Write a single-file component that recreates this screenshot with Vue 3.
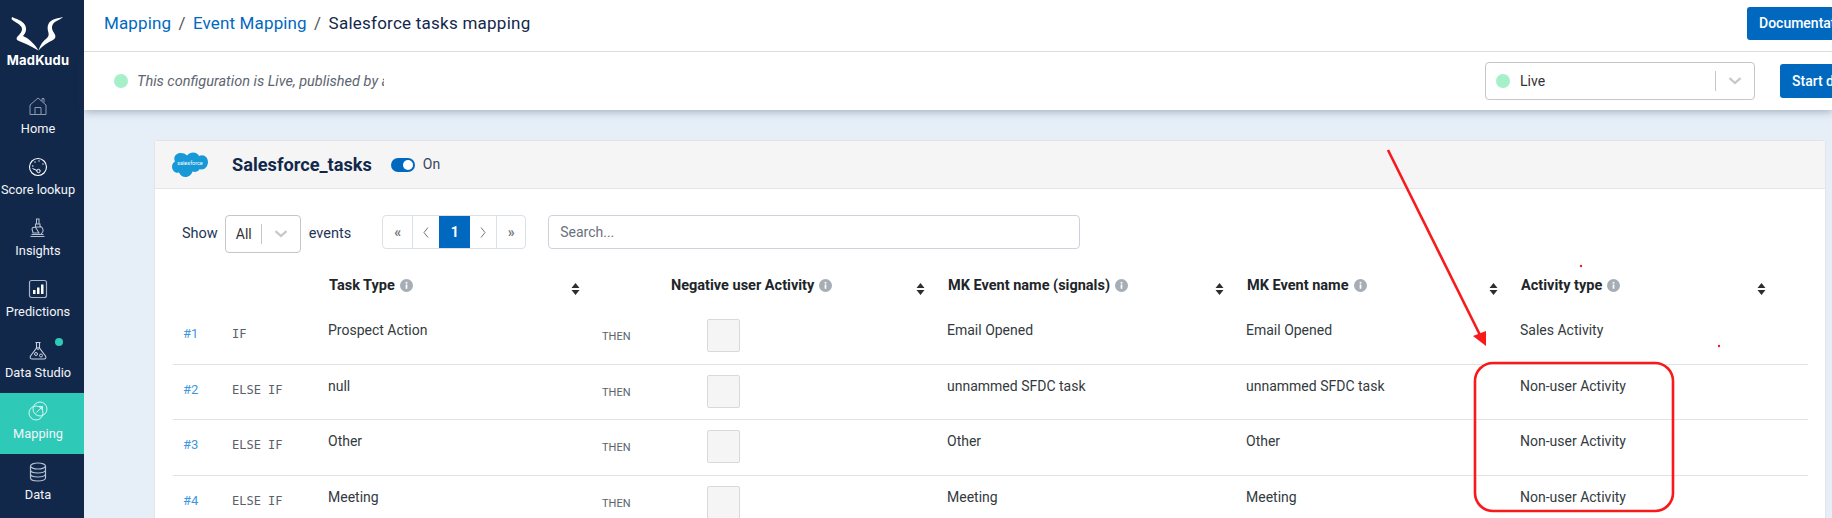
<script setup>
const navItems = [
  { key: 'home', label: 'Home' },
  { key: 'score', label: 'Score lookup' },
  { key: 'insights', label: 'Insights' },
  { key: 'predictions', label: 'Predictions' },
  { key: 'studio', label: 'Data Studio', badge: true },
  { key: 'mapping', label: 'Mapping', active: true },
  { key: 'data', label: 'Data' },
]
const headers = [
  { label: 'Task Type', cls: 'h-task' },
  { label: 'Negative user Activity', cls: 'h-neg' },
  { label: 'MK Event name (signals)', cls: 'h-sig' },
  { label: 'MK Event name', cls: 'h-name' },
  { label: 'Activity type', cls: 'h-act' },
]
const rows = [
  { n: '#1', cond: 'IF', task: 'Prospect Action', signal: 'Email Opened', name: 'Email Opened', type: 'Sales Activity' },
  { n: '#2', cond: 'ELSE IF', task: 'null', signal: 'unnammed SFDC task', name: 'unnammed SFDC task', type: 'Non-user Activity' },
  { n: '#3', cond: 'ELSE IF', task: 'Other', signal: 'Other', name: 'Other', type: 'Non-user Activity' },
  { n: '#4', cond: 'ELSE IF', task: 'Meeting', signal: 'Meeting', name: 'Meeting', type: 'Non-user Activity' },
]
</script>

<template>
  <div class="page">
    <aside class="sidebar">
      <div class="logo">
        <svg width="60" height="40" viewBox="8 14 60 40" class="logo-mark">
          <path fill="#fff" d="M12 17 C16 19 22 20 25 25 C27 29 26 33 23 36 C28 38 34 43 38.500 50.500 C31 46 24 43 19 41 C16 40 16 38 18 36 C21 33 23 30 21.500 27 C19 23 14 22 11.500 19 Z" />
          <path fill="#fff" d="M63 17 C60 20 55 21 53 24 C51 27 52 30 54 33 C56 36 56 38 53 40 C47 43 42 46 38.500 50.500 C40 45 43 41 47 38 C49 36 49 34 48 31 C47 27 48 23 51 21 C55 18 60 18 63 17 Z" />
        </svg>
        <div class="logo-text">MadKudu</div>
      </div>
      <nav class="nav">
        <a v-for="item in navItems" :key="item.key" class="nav-item" :class="{ active: item.active }">
          <span v-if="item.badge" class="nav-badge"></span>
          <svg class="nav-icon" width="20" height="20" viewBox="0 0 20 20" fill="none" stroke="currentColor" stroke-width="1">
            <template v-if="item.key === 'home'">
              <path d="M2 9 L10 2 L18 9 V18.500 H2 Z" stroke="#8c9bb1" />
              <path d="M7 18.500 V11.500 H13 V18.500" stroke="#8c9bb1" />
              <path d="M14 5 V2.500 H16 V6.500" stroke="#8c9bb1" />
            </template>
            <template v-else-if="item.key === 'score'">
              <circle cx="10" cy="10" r="8.500" stroke="#fff" stroke-width="1.100" />
              <circle cx="4.800" cy="9" r="0.700" fill="#fff" stroke="none" /><circle cx="7" cy="5" r="0.700" fill="#fff" stroke="none" />
              <circle cx="11" cy="4" r="0.700" fill="#fff" stroke="none" /><circle cx="15" cy="7" r="0.700" fill="#fff" stroke="none" />
              <path d="M4.500 11.500 L9 13.500" stroke="#fff" />
              <circle cx="10.500" cy="14" r="1.700" stroke="#fff" />
            </template>
            <template v-else-if="item.key === 'insights'">
              <path d="M8.500 1 H11 V6 H8.500 Z M7.500 6 H12 V9 H7.500 Z M12 8 C16 10 16 14 13 16 M4 11 C4 9 7 9 8 10 L11 15 H5 Z M2.500 18.500 H16.500 M3.500 16.500 H15.500" stroke="#b7c2d0" stroke-width="1.050" />
            </template>
            <template v-else-if="item.key === 'predictions'">
              <rect x="1.500" y="1.500" width="17" height="17" rx="2" stroke="#a9b5c5" stroke-width="1.200" />
              <rect x="5" y="11" width="2.500" height="4" fill="#fff" stroke="none" />
              <rect x="9" y="8.500" width="2.500" height="6.500" fill="#fff" stroke="none" />
              <rect x="13" y="5.500" width="2.500" height="9.500" fill="#fff" stroke="none" />
            </template>
            <template v-else-if="item.key === 'studio'">
              <path d="M7.500 2.500 H12.500 M8.500 2.500 V8 L2.500 16 C1.500 18 3 19 4 19 H16 C17.500 19 18.500 18 17.500 16 L11.500 8 V2.500" stroke="#c8d1dd" stroke-width="1.100" />
              <circle cx="8" cy="14" r="1.500" stroke="#c8d1dd" /><circle cx="13" cy="15.500" r="1.500" stroke="#c8d1dd" /><circle cx="10" cy="8.500" r="1" stroke="#c8d1dd" />
            </template>
            <template v-else-if="item.key === 'mapping'">
              <circle cx="8" cy="12" r="7" stroke="#e8faf7" stroke-width="0.900" />
              <circle cx="12" cy="8" r="7" stroke="#e8faf7" stroke-width="0.900" />
              <path d="M8.500 11.500 L14.500 5.500 M11 5.500 H14.500 V9" stroke="#e8faf7" stroke-width="0.900" />
            </template>
            <template v-else>
              <ellipse cx="10" cy="4" rx="7.500" ry="3" stroke="#b7c2d0" stroke-width="1.200" />
              <path d="M2.500 4 V16 C2.500 20 17.500 20 17.500 16 V4 M2.500 8 C2.500 12 17.500 12 17.500 8 M2.500 12 C2.500 16 17.500 16 17.500 12" stroke="#b7c2d0" stroke-width="1.200" />
            </template>
          </svg>
          <span class="nav-label">{{ item.label }}</span>
        </a>
      </nav>
    </aside>

    <main class="main">
      <header class="topbar">
        <div class="crumbs">
          <a>Mapping</a><span class="sep">/</span><a>Event Mapping</a><span class="sep">/</span><span class="cur">Salesforce tasks mapping</span>
        </div>
        <button class="btn btn-doc">Documentation</button>
      </header>

      <div class="statusbar">
        <span class="dot"></span>
        <span class="status-text">This configuration is Live, published by a</span>
        <div class="select live-select">
          <span class="dot small-gap"></span>
          <span class="select-value">Live</span>
          <span class="select-sep"></span>
          <svg class="chev" width="14" height="8" viewBox="0 0 14 8"><path d="M1.500 1.200 L7 6 L12.500 1.200" fill="none" stroke="#c8c8c8" stroke-width="2.300" /></svg>
        </div>
        <button class="btn btn-start">Start draft</button>
      </div>

      <section class="card">
        <div class="card-head">
          <svg class="sf-logo" width="36" height="26" viewBox="0 0 36 26">
            <path fill="#1798d7" d="M15 3.500 C16.500 1.500 19 0.500 21 0.500 C24 0.500 26 2 27 4 C28 3.500 29 3.300 30 3.300 C33.500 3.300 36 6.500 36 10 C36 14 33 17.500 29.500 17.500 L27.500 17.300 C26.500 19 24.500 20 22.500 20 L20.500 19.500 C19.500 22.500 17 25 13.500 25 C10.500 25 8 23 7 20.500 L5.500 20.700 C2.500 20.700 0 18 0 14.700 C0 12.500 1 10.500 3 9.500 C2.500 8.500 2.300 7.500 2.300 6.500 C2.300 3.500 5 1 8.500 1 C11 1 13.500 1.800 15 3.500 Z" />
            <text x="18" y="12.500" text-anchor="middle" class="sf-text">salesforce</text>
          </svg>
          <h2 class="card-title">Salesforce_tasks</h2>
          <span class="toggle"><span class="knob"></span></span>
          <span class="toggle-label">On</span>
        </div>

        <div class="card-body">
          <div class="controls">
            <span class="ctl-label">Show</span>
            <div class="select all-select">
              <span class="select-value">All</span>
              <span class="select-sep"></span>
              <svg class="chev" width="14" height="8" viewBox="0 0 14 8"><path d="M1.500 1.200 L7 6 L12.500 1.200" fill="none" stroke="#c8c8c8" stroke-width="2.300" /></svg>
            </div>
            <span class="ctl-label">events</span>
            <div class="pager">
              <span class="pg pg-a">«</span>
              <span class="pg pg-b"><svg width="6" height="11" viewBox="0 0 6 11"><path d="M5 0.500 L1 5.500 L5 10.500" fill="none" stroke="#6d7680" /></svg></span>
              <span class="pg pg-c on">1</span>
              <span class="pg pg-b"><svg width="6" height="11" viewBox="0 0 6 11"><path d="M1 0.500 L5 5.500 L1 10.500" fill="none" stroke="#6d7680" /></svg></span>
              <span class="pg pg-a last">»</span>
            </div>
            <div class="search">Search...</div>
          </div>

          <div class="grid-row head-row">
            <div></div>
            <div></div>
            <div v-for="h in headers" :key="h.label" class="th" :class="h.cls">
              <span class="th-label">{{ h.label }}</span>
              <svg class="info" width="13" height="13" viewBox="0 0 12 12">
                <circle cx="6" cy="6" r="6" fill="#a6adb4" />
                <rect x="5.200" y="5" width="1.600" height="4" fill="#fff" /><rect x="5.200" y="2.700" width="1.600" height="1.500" fill="#fff" />
              </svg>
              <svg class="sort" width="9" height="12" viewBox="0 0 9 12">
                <path d="M4.500 0 L8.500 5 H0.500 Z M4.500 12 L8.500 7 H0.500 Z" fill="#2b2f33" />
              </svg>
            </div>
          </div>

          <div v-for="(r, i) in rows" :key="r.n" class="grid-row body-row" :class="{ first: i === 0 }">
            <div class="num">{{ r.n }}</div>
            <div class="cond">{{ r.cond }}</div>
            <div class="txt">{{ r.task }}</div>
            <div class="then">THEN</div>
            <div class="chk-cell"><span class="chk"></span></div>
            <div class="txt">{{ r.signal }}</div>
            <div class="txt">{{ r.name }}</div>
            <div class="txt">{{ r.type }}</div>
          </div>
        </div>
      </section>
    </main>

    <svg class="annot" width="1832" height="518" viewBox="0 0 1832 518">
      <line x1="1388" y1="150" x2="1480" y2="335" stroke="#f9191b" stroke-width="2.600" />
      <path d="M1486 346 L1473 336 L1486 331 Z" fill="#f9191b" />
      <rect x="1475" y="363" width="198" height="148" rx="18" fill="none" stroke="#f9191b" stroke-width="2.600" />
      <circle cx="1581" cy="266" r="1.200" fill="#f9191b" />
      <circle cx="1719" cy="346" r="1.200" fill="#f9191b" />
    </svg>
  </div>
</template>

<style>
html, body { margin: 0; padding: 0; overflow: hidden; }
</style>

<style scoped>
.page {
  position: relative;
  display: flex;
  width: 1832px;
  height: 518px;
  overflow: hidden;
  background: #e6eff8;
  font-family: Roboto, "Noto Sans", sans-serif;
  color: #12284b;
}
.sidebar { width: 84px; flex: none; background: #12284b; color: #fff; display: flex; flex-direction: column; }
.logo { height: 88px; display: flex; flex-direction: column; align-items: center; padding: 14px 8px 0 0; box-sizing: border-box; }
.logo-mark { display: block; }
.logo-text { font-family: Inter, sans-serif; font-weight: 700; font-size: 13px; line-height: 14px; margin-top: -1px; letter-spacing: 0.2px; }
.nav { display: flex; flex-direction: column; }
.nav-item { position: relative; height: 61px; display: flex; flex-direction: column; align-items: center; box-sizing: border-box; padding: 8px 8px 0 0; }
.nav-item.active { background: #2ec9b7; }
.nav-icon { display: block; }
.nav-label { font-size: 12.800px; font-weight: 400; line-height: 16px; margin-top: 5px; white-space: nowrap; color: #f3f5f8; }
.nav-badge { position: absolute; right: 21px; top: 6px; width: 8px; height: 8px; border-radius: 50%; background: #2ec9b7; }

.main { flex: 1; min-width: 0; display: flex; flex-direction: column; }
.topbar { position: relative; z-index: 2; height: 51px; flex: none; background: #fff; border-bottom: 1px solid #dcdcdc; display: flex; align-items: center; justify-content: space-between; padding-left: 20px; }
.crumbs { font-size: 17px; line-height: 22px; letter-spacing: 0.14px; color: #12284b; margin-top: -5px; white-space: nowrap; }
.crumbs a { color: #0069bf; }
.cur { letter-spacing: 0.24px; }
.sep { color: #555; margin: 0 7.300px; }
.btn { flex: none; border: 0; background: #0069bf; color: #fff; font-family: inherit; font-size: 14px; font-weight: 500; border-radius: 3px; padding: 0; text-align: left; }
.btn-doc { width: 120px; height: 33px; padding-left: 12px; margin-right: -35px; margin-top: -5px; white-space: nowrap; }
.statusbar { height: 58px; flex: none; background: #fff; display: flex; align-items: center; padding-left: 30px; box-shadow: 0 2px 8px rgba(40, 60, 90, 0.35); position: relative; z-index: 1; }
.dot { width: 14px; height: 14px; border-radius: 50%; background: #a5efc9; flex: none; }
.status-text { margin-left: 9px; width: 247px; flex: none; overflow: hidden; white-space: nowrap; font-size: 14.500px; font-style: italic; color: #5d6670; }
.select { display: flex; align-items: center; box-sizing: border-box; background: #fff; border: 1px solid #c6c6c6; border-radius: 4px; }
.live-select { width: 270px; height: 38px; margin-left: 1101px; padding-left: 10px; flex: none; }
.small-gap { margin-right: 10px; }
.select-value { font-size: 14px; color: #333; }
.live-select .select-value { flex: 1; }
.select-sep { width: 1px; height: 20px; background: #c6c6c6; flex: none; }
.chev { display: block; flex: none; margin-left: 12px; margin-right: 12px; }
.btn-start { width: 90px; height: 34px; margin-left: 25px; padding-left: 12px; white-space: nowrap; }

.card { margin: 30px 0 0 70px; width: 1672px; flex: none; background: #fff; border: 1px solid #e2e4e6; border-radius: 3px; box-sizing: border-box; }
.card-head { height: 47px; background: #f5f5f5; border-bottom: 1px solid #e6e6e6; display: flex; align-items: center; padding-left: 17px; }
.sf-logo { display: block; flex: none; }
.sf-text { font-family: Roboto, sans-serif; font-size: 5.500px; fill: #fff; }
.card-title { margin: 0 0 0 24px; font-size: 18.200px; font-weight: 700; color: #12284b; line-height: 22px; }
.toggle { position: relative; width: 24px; height: 14px; border-radius: 7px; background: #0069bf; margin-left: 19px; flex: none; }
.knob { position: absolute; right: 2px; top: 2px; width: 10px; height: 10px; border-radius: 50%; background: #fff; }
.toggle-label { margin-left: 8px; font-size: 14px; color: #38465c; margin-top: -1px; }
.card-body { padding: 26px 0 0 18px; }

.controls { display: flex; align-items: flex-start; height: 51px; padding-left: 9px; }
.ctl-label { font-size: 14.500px; line-height: 38px; color: #1d3557; }
.all-select { width: 76px; height: 38px; margin: 0 8px 0 7px; padding-left: 10px; flex: none; }
.all-select .select-value { width: 27px; }
.pager { display: flex; margin-left: 31px; height: 34px; box-sizing: border-box; border: 1px solid #dbe1e6; border-radius: 4px; overflow: hidden; }
.pg { display: flex; align-items: center; justify-content: center; font-size: 14px; color: #6d7680; border-right: 1px solid #dbe1e6; box-sizing: border-box; }
.pg-a { width: 30px; font-weight: 700; }
.pg-b { width: 26px; border-right: 0; }
.pg-c { width: 31px; border: 0; }
.pg.on { background: #0069bf; color: #fff; font-weight: 700; }
.pg.last { width: 29px; border-right: 0; border-left: 1px solid #dbe1e6; }
.search { width: 532px; height: 34px; margin-left: 22px; box-sizing: border-box; border: 1px solid #ccd3da; border-radius: 4px; font-size: 14px; line-height: 32px; padding-left: 11px; color: #68727c; }

.grid-row { display: grid; grid-template-columns: 49px 96px 274px 68px 277px 299px 274px 298px; width: 1635px; }
.head-row { height: 42px; }
.grid-row > .h-task { grid-column: 3; }
.grid-row > .h-neg { grid-column: 5; }
.th { position: relative; display: flex; align-items: flex-start; gap: 5px; padding: 11px 0 0 11px; }
.th-label { font-size: 14.500px; font-weight: 700; color: #212529; line-height: 18px; white-space: nowrap; }
.info { margin-top: 2px; }
.sort { position: absolute; right: 12px; top: 17px; }
.h-act .sort { right: 42px; }
.body-row { height: 55.500px; box-sizing: border-box; border-top: 1px solid #dfe3e7; }
.body-row.first { border-top-color: transparent; }
.body-row > div { padding-left: 10px; white-space: nowrap; }
.num { font-size: 13px; line-height: 16px; padding-top: 17px; color: #3f97e0; }
.cond { font-family: "DejaVu Sans Mono", "Liberation Mono", monospace; font-size: 12px; line-height: 16px; padding-top: 17px; color: #59626b; }
.txt { font-size: 14px; line-height: 18px; padding-top: 12px; color: #333a40; }
.then { font-family: Roboto, sans-serif; font-size: 11px; line-height: 16px; padding-top: 20px; color: #59626b; }
.chk-cell { padding-top: 10px; padding-left: 47px !important; }
.chk { display: block; width: 33px; height: 33px; box-sizing: border-box; background: #f5f5f5; border: 1px solid #d9d9d9; border-radius: 2px; }

.annot { position: absolute; left: 0; top: 0; pointer-events: none; z-index: 5; }
</style>
